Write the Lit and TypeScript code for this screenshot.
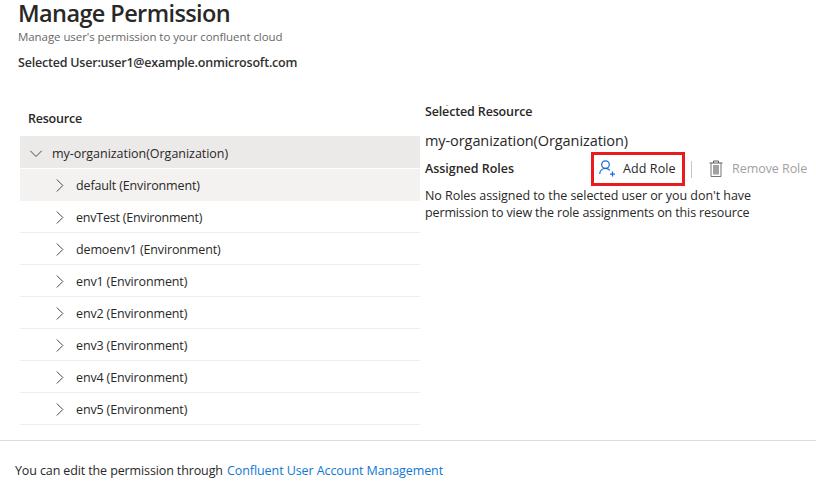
import { LitElement, html, css, svg } from "lit";
import { customElement, property } from "lit/decorators.js";
import { classMap } from "lit/directives/class-map.js";

interface Resource {
  name: string;
  spacing: number;
}

const environments: Resource[] = [
  { name: "default (Environment)", spacing: -0.14 },
  { name: "envTest (Environment)", spacing: -0.22 },
  { name: "demoenv1 (Environment)", spacing: -0.13 },
  { name: "env1 (Environment)", spacing: -0.14 },
  { name: "env2 (Environment)", spacing: -0.14 },
  { name: "env3 (Environment)", spacing: -0.14 },
  { name: "env4 (Environment)", spacing: -0.14 },
  { name: "env5 (Environment)", spacing: -0.14 },
];

const chevronDown = svg`<path d="M0.3 3.8 L6 9.5 L11.7 3.8" fill="none" stroke="#4a4948" stroke-width="1"/>`;
const chevronRight = svg`<path d="M3.8 0.5 L9.8 6.5 L3.8 12.5" fill="none" stroke="#4a4948" stroke-width="1"/>`;

@customElement("resource-tree")
export class ResourceTree extends LitElement {
  static styles = css`
    :host { display: block; width: 400px; }
    .head { height: 36px; box-sizing: border-box; padding: 10px 0 0 8px; line-height: 17px; font-weight: 600; letter-spacing: -0.22px; }
    .row { display: flex; align-items: center; height: 32px; box-sizing: border-box; border-bottom: 1px solid #f0efee; padding: 2px 0 0 33px; white-space: nowrap; }
    .row svg { width: 13px; height: 13px; flex: none; margin-right: 10px; }
    .label { line-height: 18px; }
    .root { height: 33px; background: #ebeae9; border-bottom-color: #fff; padding: 3px 0 0 10px; letter-spacing: -0.03px; }
    .root svg { margin-right: 9px; }
    .hover { background: #f3f2f1; border-bottom-color: #f3f2f1; }
  `;
  @property({ attribute: false }) items: Resource[] = [];
  render() {
    return html`
      <div class="head">Resource</div>
      <div class="row root"><svg viewBox="0 0 13 13">${chevronDown}</svg><span class="label">my-organization(Organization)</span></div>
      ${this.items.map((r, i) => html`
        <div class=${classMap({ row: true, hover: i === 0 })}>
          <svg viewBox="0 0 13 13">${chevronRight}</svg>
          <span class="label" style="letter-spacing:${r.spacing}px">${r.name}</span>
        </div>`)}
    `;
  }
}

@customElement("app-root")
export class AppRoot extends LitElement {
  static styles = css`
    :host { display: flex; flex-direction: column; height: 487px; overflow: hidden; background: #fff; color: #292827; font: 400 12.5px "Open Sans", "Noto Sans", sans-serif; }
    header { height: 100px; box-sizing: border-box; padding-left: 18px; white-space: nowrap; }
    h1 { margin: 0; height: 28px; line-height: 26px; font-size: 23.5px; font-weight: 600; letter-spacing: -0.6px; }
    .sub { height: 17px; line-height: 17px; font-size: 11.5px; letter-spacing: -0.07px; color: #696765; }
    .user { margin-top: 9px; line-height: 17px; font-weight: 600; letter-spacing: -0.21px; color: #323130; }
    main { display: flex; height: 340px; padding-left: 20px; flex: none; }
    .detail { margin-left: 5px; padding-top: 3px; white-space: nowrap; flex: 1; }
    .title { position: relative; line-height: 17px; font-weight: 600; letter-spacing: -0.15px; }
    .speck { position: absolute; top: 2px; height: 1px; width: 2px; background: #b5b3b1; }
    .speck.a { left: 21px; }
    .speck.b { left: 53px; }
    .name { margin-top: 11px; height: 21px; line-height: 20px; font-size: 14.5px; letter-spacing: -0.08px; }
    .bar { display: flex; align-items: center; height: 34px; }
    .assigned { width: 166px; font-weight: 600; line-height: 17px; padding-bottom: 2px; box-sizing: border-box; letter-spacing: -0.03px; }
    .add { display: flex; align-items: center; width: 94px; height: 34px; box-sizing: border-box; border: 3px solid #e81b1e; padding-left: 5px; letter-spacing: 0.1px; }
    .add svg { width: 17px; height: 18px; margin-right: 7px; flex: none; }
    .add span, .remove span { line-height: 17px; padding-bottom: 2px; }
    .sep { width: 1px; height: 17px; margin: 0 17px 0 6px; background: #c8c6c4; }
    .remove { display: flex; align-items: center; color: #a3a19f; letter-spacing: -0.05px; }
    .remove svg { width: 14px; height: 18px; margin-right: 9px; flex: none; }
    .msg { margin-top: 1px; line-height: 17px; letter-spacing: -0.055px; }
    .msg + .msg { margin-top: 0; letter-spacing: -0.13px; }
    footer { flex: 1; border-top: 1px solid #dcdbda; padding: 21px 0 0 15px; line-height: 18px; white-space: nowrap; }
    .note { display: inline-block; width: 212px; letter-spacing: -0.12px; }
    a { color: #0f78d4; text-decoration: none; letter-spacing: -0.08px; }
  `;
  render() {
    return html`
      <header>
        <h1>Manage Permission</h1>
        <div class="sub">Manage user's permission to your confluent cloud</div>
        <div class="user">Selected User:user1@example.onmicrosoft.com</div>
      </header>
      <main>
        <resource-tree .items=${environments}></resource-tree>
        <section class="detail">
          <div class="title">Selected Resource<i class="speck a"></i><i class="speck b"></i></div>
          <div class="name">my-organization(Organization)</div>
          <div class="bar">
            <span class="assigned">Assigned Roles</span>
            <span class="add">
              <svg viewBox="0 0 17 18" fill="none" stroke="#1b69d6" stroke-width="1.25">
                <circle cx="6.5" cy="4.6" r="3.8"/>
                <path d="M0.7 14 C0.9 10.6 3.4 8.4 6.5 8.4 C8.3 8.4 9.8 9.1 10.9 10.3 M13.5 11.5 V16.5 M11 14 H16"/>
              </svg>
              <span>Add Role</span>
            </span>
            <i class="sep"></i>
            <span class="remove">
              <svg viewBox="0 0 14 18" fill="none">
                <path d="M0.5 3 H13.5 M4.5 3 V1 H9.5 V3" stroke="#5f5d5b"/>
                <path d="M2 3 V16.5 H12 V3" stroke="#777573"/>
                <rect x="4" y="5" width="6" height="9.5" fill="#a3a19f"/>
              </svg>
              <span>Remove Role</span>
            </span>
          </div>
          <div class="msg">No Roles assigned to the selected user or you don't have</div>
          <div class="msg">permission to view the role assignments on this resource</div>
        </section>
      </main>
      <footer><span class="note">You can edit the permission through</span><a>Confluent User Account Management</a></footer>
    `;
  }
}
